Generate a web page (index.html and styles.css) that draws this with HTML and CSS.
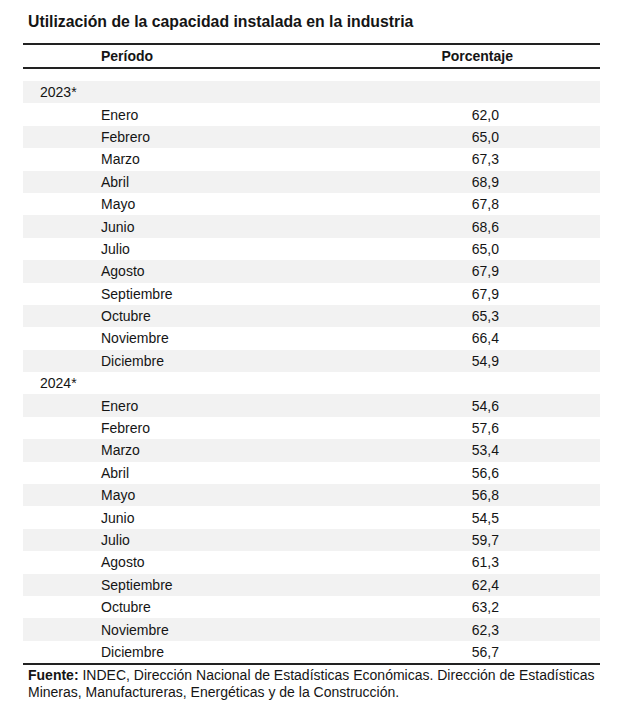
FILE: index.html
```html
<!DOCTYPE html>
<html lang="es">
<head>
<meta charset="utf-8">
<link rel="stylesheet" href="styles.css">
</head>
<body>
<div class="page">
  <h1 class="title">Utilización de la capacidad instalada en la industria</h1>
  <div class="table">
    <div class="head">
      <span class="c-period">Período</span>
      <span class="c-pct">Porcentaje</span>
    </div>
    <div class="body">
      <div class="row year"><span class="c-year">2023*</span></div>
      <div class="row"><span class="c-period">Enero</span><span class="c-val">62,0</span></div>
      <div class="row"><span class="c-period">Febrero</span><span class="c-val">65,0</span></div>
      <div class="row"><span class="c-period">Marzo</span><span class="c-val">67,3</span></div>
      <div class="row"><span class="c-period">Abril</span><span class="c-val">68,9</span></div>
      <div class="row"><span class="c-period">Mayo</span><span class="c-val">67,8</span></div>
      <div class="row"><span class="c-period">Junio</span><span class="c-val">68,6</span></div>
      <div class="row"><span class="c-period">Julio</span><span class="c-val">65,0</span></div>
      <div class="row"><span class="c-period">Agosto</span><span class="c-val">67,9</span></div>
      <div class="row"><span class="c-period">Septiembre</span><span class="c-val">67,9</span></div>
      <div class="row"><span class="c-period">Octubre</span><span class="c-val">65,3</span></div>
      <div class="row"><span class="c-period">Noviembre</span><span class="c-val">66,4</span></div>
      <div class="row"><span class="c-period">Diciembre</span><span class="c-val">54,9</span></div>
      <div class="row year"><span class="c-year">2024*</span></div>
      <div class="row"><span class="c-period">Enero</span><span class="c-val">54,6</span></div>
      <div class="row"><span class="c-period">Febrero</span><span class="c-val">57,6</span></div>
      <div class="row"><span class="c-period">Marzo</span><span class="c-val">53,4</span></div>
      <div class="row"><span class="c-period">Abril</span><span class="c-val">56,6</span></div>
      <div class="row"><span class="c-period">Mayo</span><span class="c-val">56,8</span></div>
      <div class="row"><span class="c-period">Junio</span><span class="c-val">54,5</span></div>
      <div class="row"><span class="c-period">Julio</span><span class="c-val">59,7</span></div>
      <div class="row"><span class="c-period">Agosto</span><span class="c-val">61,3</span></div>
      <div class="row"><span class="c-period">Septiembre</span><span class="c-val">62,4</span></div>
      <div class="row"><span class="c-period">Octubre</span><span class="c-val">63,2</span></div>
      <div class="row"><span class="c-period">Noviembre</span><span class="c-val">62,3</span></div>
      <div class="row"><span class="c-period">Diciembre</span><span class="c-val">56,7</span></div>
    </div>
  </div>
  <p class="source"><b>Fuente:</b> INDEC, Dirección Nacional de Estadísticas Económicas. Dirección de Estadísticas Mineras, Manufactureras, Energéticas y de la Construcción.</p>
</div>
</body>
</html>
```

FILE: styles.css
```css
html, body {
  margin: 0;
  padding: 0;
  background: #ffffff;
}
body {
  color: #151515;
  font-family: "Liberation Sans", Arial, sans-serif;
}
.page {
  width: 577px;
  padding: 11px 0 0 23px;
}
.title {
  margin: 0 0 0 5px;
  font-size: 15.8px;
  line-height: 21px;
  font-weight: bold;
}
.table {
  margin-top: 11px;
}
.head {
  display: flex;
  align-items: center;
  height: 22px;
  border-top: 2px solid #222;
  border-bottom: 2px solid #222;
  font-weight: bold;
  font-size: 14px;
}
.head .c-period {
  margin-left: 78px;
}
.head .c-pct {
  margin-left: auto;
  margin-right: 87px;
}
.body {
  padding-top: 12px;
  border-bottom: 2px solid #222;
}
.row {
  display: flex;
  align-items: center;
  height: 22.4px;
  font-size: 14px;
}
.row:nth-child(odd) {
  background: #f2f2f2;
}
.c-year {
  margin-left: 17px;
}
.row .c-period {
  margin-left: 78px;
}
.c-val {
  margin-left: auto;
  margin-right: 101px;
}
.source {
  margin: 2px 0 0 5px;
  width: 580px;
  font-size: 14px;
  line-height: 17px;
}
```
